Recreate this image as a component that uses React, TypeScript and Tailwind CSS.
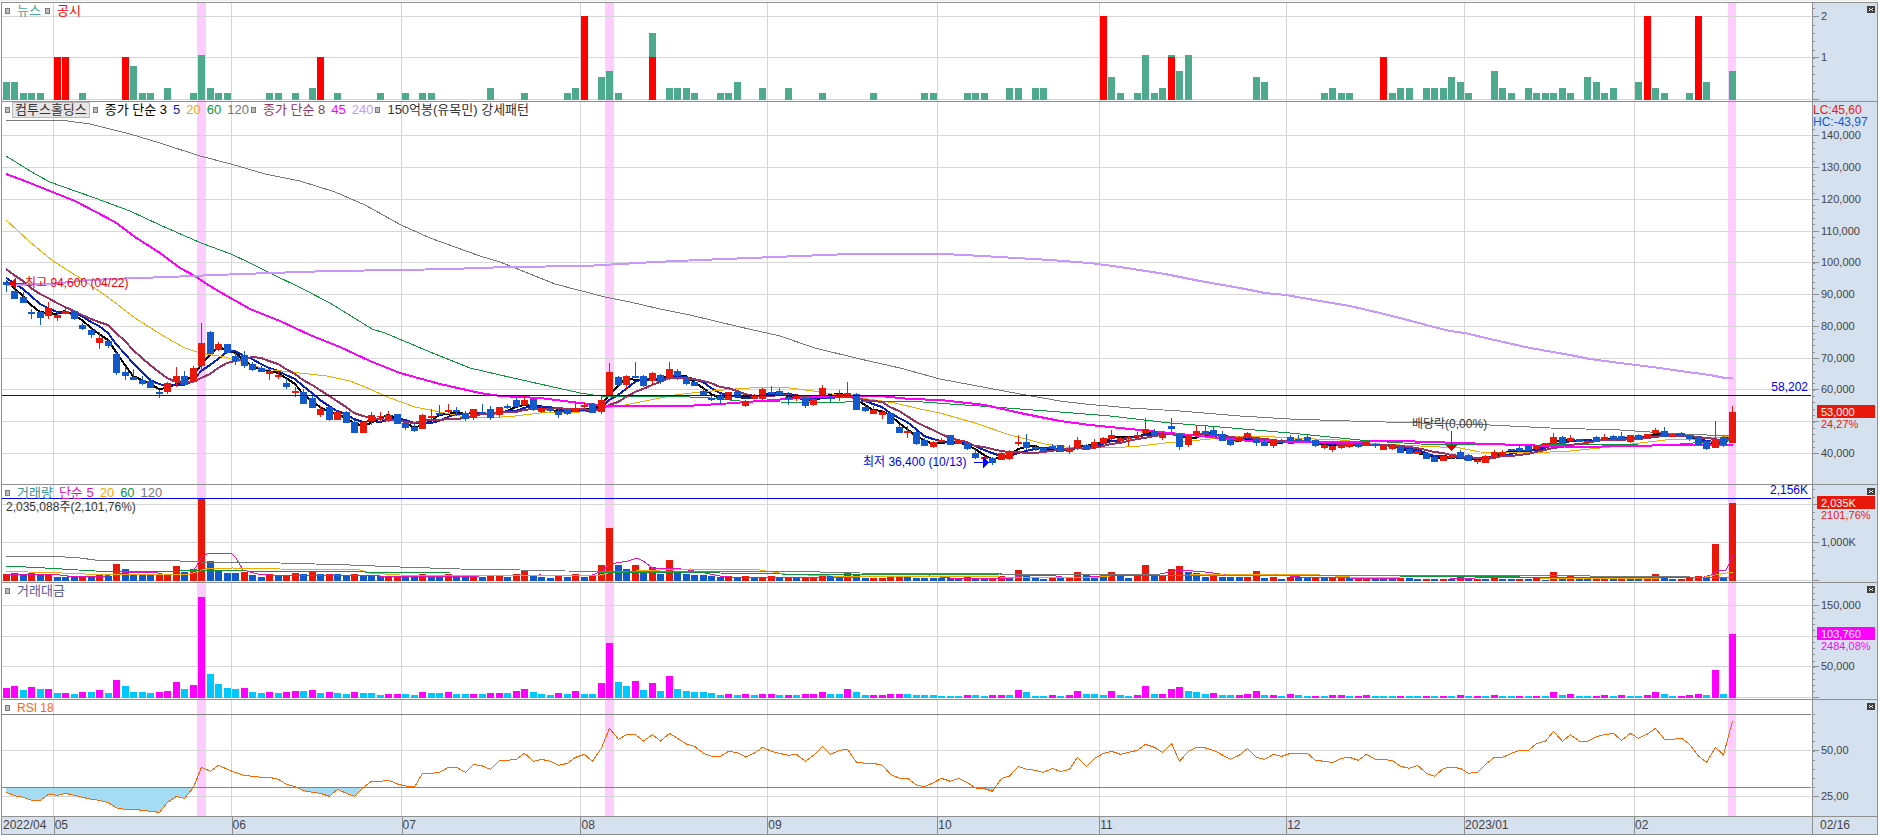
import React from 'react';

type TPoint = [number, number];
type TLabel = { y: number; text: string };

const PLOT_LEFT = 2;
const PLOT_WIDTH = 1810;
const AXIS_LEFT = 1813;
const BAR_STEP = 8.503;

const UP = '#e8190a';
const DOWN = '#1259cc';
const GRID = '#d6d6d6';

const months = [
  { x: 2, label: '2022/04' },
  { x: 53, label: '05' },
  { x: 231, label: '06' },
  { x: 401, label: '07' },
  { x: 580, label: '08' },
  { x: 767, label: '09' },
  { x: 937, label: '10' },
  { x: 1099, label: '11' },
  { x: 1286, label: '12' },
  { x: 1464, label: '2023/01' },
  { x: 1634, label: '02' },
];

const highlights = [
  { x: 197, width: 9 },
  { x: 605, width: 9 },
  { x: 1728, width: 8 },
];

// news count bars: bar index -> height
const news: Record<number, number> = {
  0: 18, 1: 18, 2: 7, 3: 7, 4: 7, 9: 7, 15: 34, 16: 7, 17: 7, 19: 12, 22: 7, 23: 45, 24: 12, 25: 7, 26: 7,
  31: 7, 32: 7, 34: 7, 36: 12, 39: 7, 44: 7, 47: 7, 49: 7, 50: 7, 57: 12, 61: 7, 66: 7, 67: 12, 70: 23, 71: 29,
  72: 7, 76: 67, 78: 12, 79: 12, 80: 12, 81: 7, 84: 7, 85: 7, 86: 18, 89: 12, 92: 12, 96: 7, 102: 7, 108: 7,
  109: 7, 113: 7, 114: 7, 115: 7, 118: 12, 119: 12, 121: 12, 122: 12, 130: 23, 131: 7, 133: 7, 134: 45, 135: 7,
  136: 12, 137: 45, 138: 29, 139: 45, 147: 23, 148: 18, 155: 7, 156: 12, 157: 7, 158: 7, 163: 7, 164: 12,
  165: 12, 167: 12, 168: 12, 169: 12, 170: 23, 171: 18, 172: 7, 175: 29, 176: 12, 177: 7, 179: 12, 180: 7,
  181: 7, 182: 7, 183: 12, 184: 7, 186: 23, 187: 18, 188: 7, 189: 12, 192: 18, 194: 12, 195: 7, 198: 7,
  200: 18, 203: 29,
};

const filings: Record<number, number> = {
  6: 43, 7: 43, 14: 43, 37: 43, 68: 84, 76: 43, 129: 84, 137: 43, 162: 43, 193: 84, 199: 84,
};

// direction, high, body top, body bottom, low
const candles = `
b280,282,285,292 b291,291,299,299 b292,297,303,303 b309,312,314,319 b311,312,318,325 r302,308,316,319
r312,315,318,321 r306,311,314,314 b310,311,319,320 b323,325,329,330 b328,330,335,338 r332,338,343,349
b339,341,346,348 b352,354,373,375 b366,372,376,380 b369,377,380,380 b376,380,384,385 b378,381,388,388
b390,392,394,398 r382,383,392,394 r367,376,381,387 b371,376,385,385 r366,368,382,382 r323,343,366,371
b331,332,354,354 r342,344,350,351 b344,344,353,353 b353,356,361,365 b351,355,366,368 b362,364,370,371
b366,368,372,372 r369,371,374,380 r372,375,377,379 b378,383,387,389 r387,391,393,397 b389,392,404,404
b394,398,408,408 r406,409,415,417 b406,407,420,421 r410,412,420,420 b411,412,423,423 b420,422,433,433
r421,422,433,433 r412,415,421,425 r412,416,417,422 r411,415,420,422 b414,414,424,424 b421,423,428,430
b423,427,431,432 r414,415,429,429 r409,416,418,420 b405,413,415,416 r404,410,412,413 b407,410,412,416
b411,413,419,421 r409,409,418,420 b404,412,414,414 b406,409,418,420 r407,407,415,417 b404,406,408,409
b398,400,407,407 r396,400,405,406 b398,399,410,411 r406,408,412,413 b406,409,411,412 b409,411,415,418
b408,410,414,415 r402,408,412,412 r402,405,407,408 b403,404,413,413 r396,400,412,414 r363,372,396,396
b376,377,385,386 r375,376,385,390 b362,376,378,378 b375,376,386,387 r372,373,381,385 b374,375,382,384
r362,369,378,380 b369,371,376,380 b376,379,384,385 b380,382,386,386 b388,391,395,396 b395,398,400,401
b394,396,400,404 r392,392,400,400 b390,392,397,397 r400,401,406,407 r394,395,399,399 r388,389,399,400
b386,392,394,394 b388,391,395,396 b392,397,399,405 r394,396,399,401 b396,398,406,408 r397,399,405,406
r385,388,396,396 b395,397,399,402 r390,394,397,401 r382,393,397,397 b393,394,410,410 b405,407,411,412
r406,410,414,414 r410,412,415,419 b412,413,424,424 b425,427,433,433 r426,431,433,438 b431,432,444,445
b438,440,446,446 r441,442,447,448 r438,440,442,443 b435,435,445,445 r440,440,444,444 b441,443,449,450
b449,453,458,459 r456,457,459,460 b457,458,463,465 r452,453,460,460 r450,451,459,460 r435,442,444,446
b434,442,448,450 b445,447,449,451 b447,448,451,452 b444,446,449,449 b445,445,452,452 r445,449,452,454
r437,440,448,450 b444,445,450,450 r439,442,448,449 r437,438,444,445 r430,435,439,440 r437,438,441,442
r436,437,439,446 r432,435,437,438 r418,429,433,434 b429,431,435,436 r432,435,438,440 b418,426,429,432
b433,434,447,450 r434,435,445,447 r425,431,435,436 b425,431,434,435 b427,430,435,436 b431,434,441,441
b438,440,445,446 r436,438,441,442 r432,433,438,439 b437,439,443,446 b440,442,446,446 r440,440,446,448
b439,441,443,443 b435,437,441,442 b435,439,441,442 b435,437,441,442 b439,440,446,447 r444,445,448,449
r445,446,450,452 r443,445,448,449 r442,444,447,448 b443,444,447,448 r441,442,446,446 b443,444,446,448
r445,446,450,450 r444,446,449,450 b446,447,453,453 b447,449,454,454 r449,451,454,454 b452,453,459,459
b455,457,462,462 r455,456,461,461 r454,456,458,459 b450,452,458,459 b454,455,461,461 r458,460,462,464
r455,456,463,463 r450,452,457,458 r450,452,455,456 b449,449,451,451 b445,448,451,452 b445,446,451,451
r445,445,449,450 r443,443,445,446 r433,437,444,444 b436,437,444,444 r435,438,441,442 b439,439,442,442
r440,441,443,444 b436,437,441,441 r434,437,439,440 b435,436,439,439 b432,436,440,441 r435,435,442,443
b434,435,439,440 r434,434,437,438 r428,430,433,434 b427,431,437,437 r433,434,437,437 b432,433,436,437
b435,436,439,441 b436,437,445,446 b440,441,449,450 r421,439,448,448 b436,437,445,447 r406,412,443,443`
  .trim()
  .split(/\s+/)
  .map((item) => {
    const [high, top, bottom, low] = item.slice(1).split(',').map(Number);
    return { up: item[0] === 'r', high, top, bottom, low };
  });

const volume = `
r7 r8 b6 r8 b7 r7 b4 b4 b5 r5 b5 r7 b5 r17 b12 b7 b7 b7 r7 r7 r15 b9 r12 r82 b20 b11 b8 b8 r9 b6 b4 r7 b5 r6
r8 b7 r9 b7 r7 b7 b5 r7 b6 b6 b5 r4 r4 b4 b4 r7 b4 b4 r7 b4 b4 r4 b4 r6 r6 b4 r7 r10 b6 b4 b3 r6 b4 r7 b4 r5
r16 r53 b16 b12 r16 b9 r14 b7 r21 b9 b7 b6 b6 b5 b4 r5 b4 r5 b3 r4 r5 b3 r4 b3 r4 r3 r7 b5 b4 r9 b6 b3 r3 r3
r5 r5 b5 b3 b3 b3 b3 b3 b3 r5 b3 b3 r3 r5 b3 r11 b5 b3 b2 r3 b3 r3 r9 b6 b4 b4 r9 b5 b3 r5 r16 b5 r5 r12 r15
b9 b8 b4 r7 b4 b4 b4 r4 r10 b3 r4 b2 r4 b4 b4 r3 b3 r3 r5 b3 r3 r3 b3 b3 b3 r3 b3 b2 r2 b2 r2 b2 r4 b2 r2 b2
r4 b2 b2 r2 b2 r3 b1 r9 b2 r5 b2 b2 r2 r2 b2 r2 b2 b2 r2 r7 b4 b2 r2 r3 r5 b3 r37 b4 r78`;

const tradeValue = `
r10 r12 b8 r11 b9 r9 b5 r5 b4 r6 b6 r8 b5 r18 b12 b6 b6 b5 r6 r7 r16 b9 r13 r101 b24 b14 b10 b9 r10 b6 b5 r6
b5 r6 r7 b7 r8 b5 r6 b5 b4 r6 b5 b5 b3 r4 r4 b4 b3 r6 b5 b5 r6 b4 b4 r4 b4 r5 r5 b5 r7 r9 b6 b4 b3 r5 b4 r7
b4 b4 r15 r55 b16 b12 r17 b8 r15 b7 r22 b9 b7 b6 b6 b5 b3 r4 b3 r4 b3 r4 r4 b3 r3 b3 r4 r4 r6 b4 b4 r9 b6 b3
r3 r3 r4 r4 b4 b3 b3 b3 b2 b2 b2 r3 b3 b2 r3 r3 b3 r8 b6 b2 b2 r3 b2 r3 r7 b4 b4 b3 r7 b3 b2 r3 r12 b4 r4 r9
r11 b7 b6 b4 r5 b3 b3 r3 r4 r7 b3 r3 b2 r4 b3 b2 r2 b2 r3 r3 b2 r2 r3 b2 b2 b2 r2 b2 b2 r2 b2 r2 b2 r3 b2 r2
b2 r3 b2 b2 r2 b2 r2 b2 r6 b3 r4 b2 b2 r2 r3 b2 r3 b2 b2 r3 r6 b4 b2 r2 r3 r4 b3 r28 b4 r64`;

// kept in thirds of a pixel, 613 is RSI 50 and 751 is RSI 25
const rsi = [
  739, 749, 754, 763, 763, 745, 748, 742, 748, 754, 760, 763, 770, 786, 790, 790, 793, 796, 799, 769, 751, 757,
  724, 664, 676, 658, 670, 680, 688, 691, 694, 694, 700, 715, 722, 734, 739, 742, 751, 730, 742, 751, 724, 706,
  706, 703, 714, 720, 723, 682, 682, 679, 664, 664, 679, 655, 660, 670, 643, 643, 640, 622, 646, 640, 646, 658,
  652, 634, 625, 646, 606, 547, 580, 566, 566, 585, 566, 585, 562, 577, 594, 601, 622, 631, 631, 616, 620, 633,
  621, 604, 616, 622, 628, 625, 646, 628, 601, 625, 613, 610, 649, 652, 652, 658, 685, 697, 697, 717, 722, 710,
  697, 706, 697, 710, 726, 728, 736, 697, 690, 661, 670, 673, 679, 667, 677, 670, 634, 661, 637, 622, 616, 625,
  619, 613, 595, 604, 619, 592, 646, 616, 604, 606, 613, 627, 640, 627, 607, 634, 640, 625, 631, 622, 622, 622,
  643, 646, 650, 637, 634, 643, 625, 640, 640, 644, 661, 667, 658, 682, 691, 667, 664, 667, 682, 679, 655, 634,
  634, 622, 613, 613, 593, 585, 556, 586, 566, 586, 586, 572, 566, 562, 583, 562, 577, 564, 547, 580, 580, 577,
  595, 630, 649, 604, 627, 525,
];

const ma20 =
  '6,220 30,242 53,261 80,278 105,295 135,318 165,337 185,348 200,353 225,357 240,362 265,369 290,372 327,376 350,381 370,389 387,397 415,407 440,412 465,417 490,418 515,416 540,413 580,412 605,408 625,405 650,400 675,395 700,392 735,389 765,387 790,388 820,392 850,397 875,400 895,403 920,409 940,413 975,423 1010,435 1045,444 1065,447 1110,448 1140,446 1165,443 1200,440 1230,437 1260,436 1290,438 1340,440 1380,444 1420,446 1460,448 1480,452 1530,453 1570,451 1610,447 1640,443 1665,440 1700,439 1733,436';
const ma45 =
  '6,174 25,181 55,193 75,201 115,222 135,237 160,253 180,268 195,276 205,283 220,292 250,309 280,321 310,335 340,347 370,361 400,373 440,384 480,393 500,396 540,398 580,403 610,406 640,406 685,406 720,404 760,401 800,398 840,396 880,396 910,399 940,400 985,405 1020,413 1060,421 1090,425 1140,430 1180,434 1220,438 1250,441 1290,442 1340,442 1400,441 1460,443 1520,445 1580,447 1625,446 1680,445 1733,445';
const ma60 =
  '6,156 35,174 50,182 75,191 95,198 130,211 160,225 201,243 231,254 250,263 270,273 303,289 330,303 372,329 385,333 430,352 470,368 500,375 540,384 580,393 600,396 640,397 670,396 710,398 740,401 780,402 820,403 870,401 910,401 950,404 980,406 1020,409 1060,412 1110,416 1170,423 1220,427 1290,433 1340,438 1370,441 1420,444 1480,445 1540,445 1640,444 1680,444 1733,440';
const ma120 =
  '6,121 25,120 41,121 60,120 90,124 130,134 160,143 200,156 231,164 265,174 300,181 335,192 365,205 401,225 430,238 480,256 500,262 530,274 555,284 578,290 605,297 630,302 660,309 690,315 740,327 780,336 815,348 860,359 900,368 940,379 1020,394 1060,401 1085,404 1130,408 1180,411 1240,416 1290,419 1350,421 1420,423 1490,425 1550,428 1620,430 1680,434 1733,436';
const ma240 =
  '6,285 50,284 80,281 110,279 168,277 215,275 270,273 330,271 400,270 450,269 508,267 585,266 620,264 655,262 700,260 750,258 800,256 850,254 900,254 945,254 1000,257 1050,260 1090,263 1120,267 1165,274 1200,281 1240,288 1265,293 1286,295 1320,301 1350,306 1380,313 1400,318 1430,326 1450,331 1465,333 1490,339 1530,348 1570,355 1590,359 1620,363 1660,368 1680,371 1710,375 1725,378 1733,378';

const volumeMa5 =
  '6,574 60,575 75,577 105,576 115,574 130,572 155,572 165,575 190,574 196,567 202,556 210,553 232,554 236,558 243,570 258,574 280,576 330,575 380,576 410,577 480,576 540,575 590,576 602,571 610,564 628,561 637,558 643,561 654,569 675,568 700,572 720,576 740,578 860,577 930,576 950,578 1012,578 1022,575 1050,575 1062,577 1090,577 1110,575 1160,574 1180,570 1205,572 1220,574 1280,575 1300,577 1400,579 1450,579 1500,577 1540,577 1600,578 1700,578 1711,575 1717,571 1726,570 1733,556';
const volumeMa20 =
  '6,571 28,572 62,573 85,574 190,574 205,569 232,568 280,569 360,570 370,573 400,575 460,576 560,575 600,575 612,572 660,570 690,569 760,570 785,574 830,576 1000,577 1100,577 1120,575 1190,575 1225,574 1275,574 1320,575 1350,577 1400,578 1540,578 1660,578 1705,577 1715,575 1733,572';
const volumeMa60 =
  '6,566 45,568 95,571 160,572 200,570 245,571 365,572 450,573 600,573 650,572 720,573 780,574 930,575 1000,574 1110,575 1160,576 1400,576 1520,577 1660,578 1733,577';
const volumeMa120 =
  '6,556 50,556 80,558 95,560 160,560 200,562 280,563 350,565 400,567 460,569 520,570 565,571 820,572 860,573 1000,574 1160,575 1400,575 1590,576 1690,577 1733,577';

// closes of the sessions before the visible range
const earlierCloses = [250, 254, 258, 273, 274, 277, 281];

const barLeft = (index: number) => 3 + Math.floor(index * BAR_STEP + 0.2);
const toPoints = (points: TPoint[]) => points.map((point) => point.join(',')).join(' ');

function movingAverage(period: number) {
  const closes = [...earlierCloses, ...candles.map((candle) => (candle.up ? candle.top : candle.bottom))];
  return toPoints(
    candles.map((_, index) => {
      const end = index + earlierCloses.length + 1;
      const sum = closes.slice(end - period, end).reduce((acc, close) => acc + close, 0);
      return [barLeft(index) + 3, Math.round(sum / period)];
    })
  );
}

const rsiLine = toPoints(rsi.map((value, index) => [barLeft(index) + 3.5, 546 + value / 3]));

function Line({ points, color, width = 1 }: { points: string; color: string; width?: number }) {
  return <polyline points={points} fill="none" stroke={color} strokeWidth={width} />;
}

function HLine({ y, color = GRID }: { y: number; color?: string }) {
  return <rect x={PLOT_LEFT} y={y} width={PLOT_WIDTH - 1} height={1} fill={color} />;
}

function Bars({ data, base, up, down }: { data: string; base: number; up: string; down: string }) {
  return (
    <>
      {data
        .trim()
        .split(/\s+/)
        .map((item, index) => {
          const height = Number(item.slice(1));
          return (
            <rect
              key={index}
              x={barLeft(index)}
              y={base - height}
              width={7}
              height={height}
              fill={item[0] === 'r' ? up : down}
            />
          );
        })}
    </>
  );
}

function CountBars({ data, color }: { data: Record<number, number>; color: string }) {
  return (
    <>
      {Object.entries(data).map(([index, height]) => (
        <rect key={index} x={barLeft(Number(index))} y={100 - height} width={7} height={height} fill={color} />
      ))}
    </>
  );
}

function Marker() {
  return <span className="h-[6px] w-[5px] shrink-0 border border-[#7a7a7a] bg-[#bdbdbd]" />;
}

// text pinned to a data point of the plot
function Note({ x, top, className, children }: { x: number; top: string; className: string; children: string }) {
  return (
    <span
      className={`absolute whitespace-nowrap ${top} ${className}`}
      style={{ left: `${((x - PLOT_LEFT) / PLOT_WIDTH) * 100}%` }}
    >
      {children}
    </span>
  );
}

interface PanelProps {
  name: string;
  top: number;
  height: number;
  grid: number[];
  labels: TLabel[];
  majors: number[];
  minorFrom: number;
  minorStep: number;
  tag?: { y: number; text: string; change: string; color: string };
  closable?: boolean;
  legend: React.ReactNode;
  axisExtra?: React.ReactNode;
  children: React.ReactNode;
}

function Panel(props: PanelProps) {
  const { name, top, height, grid, labels, majors, minorFrom, minorStep, tag, closable = true } = props;
  const minors: number[] = [];
  for (let y = minorFrom; y < majors[majors.length - 1]; y += minorStep) minors.push(Math.round(y));

  return (
    <section aria-label={name} className="flex border-b border-[#8f8f8f]">
      <div className="relative min-w-0 flex-1">
        <svg
          className="block w-full"
          height={height}
          viewBox={`${PLOT_LEFT} ${top} ${PLOT_WIDTH} ${height}`}
          preserveAspectRatio="none"
          shapeRendering="crispEdges"
        >
          {highlights.map((item) => (
            <rect key={item.x} x={item.x} y={top} width={item.width} height={height} fill="#ffccff" />
          ))}
          {grid.map((y) => (
            <HLine key={y} y={y} />
          ))}
          {months.slice(1).map((month) => (
            <rect key={month.x} x={month.x} y={top} width={1} height={height} fill={GRID} />
          ))}
          {props.children}
        </svg>
        {props.legend}
      </div>
      <div className="relative w-[65px] shrink-0 border-l border-[#8f8f8f] bg-[#d6e1ef] text-[11px]">
        <svg width={64} height={height} viewBox={`${AXIS_LEFT} ${top} 64 ${height}`} className="block">
          <g fill="#8f8f8f">
            {minors.map((y) => (
              <rect key={y} x={AXIS_LEFT} y={y} width={2} height={1} />
            ))}
            {majors.map((y) => (
              <rect key={y} x={AXIS_LEFT} y={y} width={6} height={1} />
            ))}
          </g>
          {labels.map((label) => (
            <text key={label.text} x={1821} y={label.y + 4} fill="#444444">
              {label.text}
            </text>
          ))}
          {tag && (
            <>
              <rect x={1817} y={tag.y} width={58} height={13} fill={tag.color} />
              <text x={1821} y={tag.y + 11} fill="#ffffff">
                {tag.text}
              </text>
              <text x={1821} y={tag.y + 23} fill={tag.color}>
                {tag.change}
              </text>
            </>
          )}
          {props.axisExtra}
        </svg>
        {closable && (
          <button
            type="button"
            aria-label={`${name} 닫기`}
            className="absolute right-[2px] top-[3px] flex h-[7px] w-2 items-center justify-center bg-[#404040]"
          >
            <svg width={4} height={3} viewBox="0 0 4 3" shapeRendering="crispEdges">
              <path d="M0 0h1v1h-1zM3 0h1v1h-1zM1 1h2v1h-2zM0 2h1v1h-1zM3 2h1v1h-1z" fill="#ffffff" />
            </svg>
          </button>
        )}
      </div>
    </section>
  );
}

const legendClass = 'absolute left-[3px] top-0 flex items-center whitespace-nowrap text-[13px]';

export default function App() {
  return (
    <main className="min-h-screen bg-white pl-px pr-[2px] font-['Liberation_Sans','Noto_Sans_CJK_KR',sans-serif] text-xs leading-4">
      <div className="h-[2px] border-t border-[#ececec]" />
      <div className="border-x border-t border-[#8f8f8f]">
        <Panel
          name="뉴스 공시"
          top={3}
          height={98}
          grid={[16, 57, 99]}
          labels={[
            { y: 16, text: '2' },
            { y: 57, text: '1' },
          ]}
          majors={[16, 57, 99]}
          minorFrom={8}
          minorStep={8.3}
          legend={
            <div className={legendClass}>
              <Marker />
              <span className="ml-[7px] mr-1 text-[#4eaa8c]">뉴스</span>
              <Marker />
              <span className="ml-[7px] text-[#ff0000]">공시</span>
            </div>
          }
        >
          <CountBars data={news} color="#4eaa8c" />
          <CountBars data={filings} color="#ff0000" />
        </Panel>

        <Panel
          name="컴투스홀딩스"
          top={102}
          height={382}
          closable={false}
          grid={[135, 167, 199, 231, 262, 294, 326, 358, 389, 421, 453]}
          labels={[
            { y: 135, text: '140,000' },
            { y: 167, text: '130,000' },
            { y: 199, text: '120,000' },
            { y: 231, text: '110,000' },
            { y: 262, text: '100,000' },
            { y: 294, text: '90,000' },
            { y: 326, text: '80,000' },
            { y: 358, text: '70,000' },
            { y: 389, text: '60,000' },
            { y: 453, text: '40,000' },
          ]}
          majors={[135, 167, 199, 231, 262, 294, 326, 358, 389, 421, 453]}
          minorFrom={129}
          minorStep={6.36}
          tag={{ y: 405, text: '53,000', change: '24,27%', color: UP }}
          axisExtra={
            <g className="text-xs">
              <text x={AXIS_LEFT} y={114} fill={UP}>
                LC:45,60
              </text>
              <text x={AXIS_LEFT} y={126} fill={DOWN}>
                HC:-43,97
              </text>
            </g>
          }
          legend={
            <>
              <div className={legendClass}>
                <Marker />
                <button
                  type="button"
                  className="ml-[2px] mr-[3px] flex h-4 items-center border border-[#bababa] bg-[#e6e6e6] px-[2px] text-[#333333]"
                >
                  컴투스홀딩스
                </button>
                <Marker />
                <div className="ml-[7px] mr-[2px] flex gap-[6px]">
                  <span className="text-black">종가 단순 3</span>
                  <span className="text-[#0a22b4]">5</span>
                  <span className="text-[#f0aa00]">20</span>
                  <span className="text-[#0a963c]">60</span>
                  <span className="text-[#787878]">120</span>
                </div>
                <Marker />
                <div className="ml-[7px] mr-[2px] flex gap-[6px]">
                  <span className="text-[#963264]">종가 단순 8</span>
                  <span className="text-[#ff00ff]">45</span>
                  <span className="text-[#c896ff]">240</span>
                </div>
                <Marker />
                <span className="ml-[7px] text-[#333333]">150억봉(유목민) 강세패턴</span>
              </div>
              <Note x={25} top="top-[173px]" className="text-[#ee0000]">
                최고 94,600 (04/22)
              </Note>
              <Note x={863} top="top-[352px]" className="text-[#0000e6]">
                최저 36,400 (10/13)
              </Note>
              <Note x={1412} top="top-[314px]" className="text-[#333333]">
                배당락(0,00%)
              </Note>
              <span className="absolute right-1 top-[277px] text-[#0000e6]">58,202</span>
            </>
          }
        >
          <Line points={movingAverage(3)} color="#000000" width={2} />
          <Line points={movingAverage(5)} color="#0a22b4" width={2} />
          <Line points={ma20} color="#f0aa00" />
          <Line points={ma60} color="#0a963c" />
          <Line points={ma120} color="#787878" />
          <Line points={movingAverage(8)} color="#963264" width={2} />
          <Line points={ma45} color="#ff00ff" width={2} />
          <Line points={ma240} color="#c896ff" width={2} />
          {candles.map((candle, index) => (
            <g key={index} fill={candle.up ? UP : DOWN}>
              <rect x={barLeft(index) + 3} y={candle.high} width={1} height={candle.low - candle.high} />
              <rect x={barLeft(index)} y={candle.top} width={7} height={candle.bottom - candle.top} />
            </g>
          ))}
          <HLine y={395} color="#0000e6" />
          <path d="M9 283.5L16 278V289ZM16 283H24V284H16Z" fill="#ee0000" />
          <path d="M989 462.5L983 457V468ZM974 462H983V463H974Z" fill="#0000ff" />
          <path d="M1451.5 451L1446 445H1457ZM1451 431H1452V445H1451Z" fill="#e60000" />
        </Panel>

        <Panel
          name="거래량"
          top={485}
          height={97}
          grid={[504, 542, 580]}
          labels={[{ y: 542, text: '1,000K' }]}
          majors={[504, 542, 580]}
          minorFrom={489}
          minorStep={7.6}
          tag={{ y: 496, text: '2,035K', change: '2101,76%', color: UP }}
          legend={
            <>
              <div className={legendClass}>
                <Marker />
                <div className="ml-[7px] flex gap-[6px]">
                  <span className="text-[#329696]">거래량</span>
                  <span className="text-[#e614b4]">단순 5</span>
                  <span className="text-[#f0aa00]">20</span>
                  <span className="text-[#0a963c]">60</span>
                  <span className="text-[#787878]">120</span>
                </div>
              </div>
              <span className="absolute left-1 top-[14px] text-[#333333]">2,035,088주(2,101,76%)</span>
              <span className="absolute right-1 top-[-3px] text-[#0000e6]">2,156K</span>
            </>
          }
        >
          <Bars data={volume} base={581} up={UP} down={DOWN} />
          <Line points={volumeMa5} color="#e614b4" />
          <Line points={volumeMa20} color="#f0aa00" />
          <Line points={volumeMa60} color="#0a963c" />
          <Line points={volumeMa120} color="#787878" />
          <HLine y={498} color="#0000e6" />
        </Panel>

        <Panel
          name="거래대금"
          top={583}
          height={116}
          grid={[605, 636, 666, 697]}
          labels={[
            { y: 605, text: '150,000' },
            { y: 666, text: '50,000' },
          ]}
          majors={[605, 636, 666, 697]}
          minorFrom={587}
          minorStep={6.13}
          tag={{ y: 627, text: '103,760', change: '2484,08%', color: '#ff00ff' }}
          legend={
            <div className={legendClass}>
              <Marker />
              <span className="ml-[7px] text-[#5a5a96]">거래대금</span>
            </div>
          }
        >
          <Bars data={tradeValue} base={698} up="#ff00ff" down="#00c8ff" />
        </Panel>

        <Panel
          name="RSI"
          top={700}
          height={116}
          grid={[750, 796]}
          labels={[
            { y: 750, text: '50,00' },
            { y: 796, text: '25,00' },
          ]}
          majors={[750, 796]}
          minorFrom={714}
          minorStep={9.15}
          legend={
            <div className={legendClass}>
              <Marker />
              <span className="ml-[7px] text-xs leading-4 text-[#ff6400]">RSI 18</span>
            </div>
          }
        >
          <clipPath id="oversold">
            <rect x={PLOT_LEFT} y={787} width={PLOT_WIDTH} height={29} />
          </clipPath>
          <polygon points={`6,787 ${rsiLine} 1733,787`} fill="#a3dcf3" clipPath="url(#oversold)" />
          <HLine y={714} color="#828282" />
          <HLine y={787} color="#828282" />
          <Line points={rsiLine} color="#ff6400" />
        </Panel>

        <div className="flex h-[18px] border-b border-[#8f8f8f] bg-[#d6e1ef] text-[#444444]">
          <div className="flex min-w-0 flex-1">
            {months.map((month, index) => {
              const next = index < months.length - 1 ? months[index + 1].x : PLOT_LEFT + PLOT_WIDTH;
              return (
                <div
                  key={month.label}
                  className={`min-w-0 basis-0 whitespace-nowrap ${index ? 'border-l border-[#8f8f8f]' : 'pl-px'}`}
                  style={{ flexGrow: next - month.x }}
                >
                  {month.label}
                </div>
              );
            })}
          </div>
          <div className="w-[65px] shrink-0 border-l border-[#8f8f8f] pl-[7px]">02/16</div>
        </div>
      </div>
    </main>
  );
}
